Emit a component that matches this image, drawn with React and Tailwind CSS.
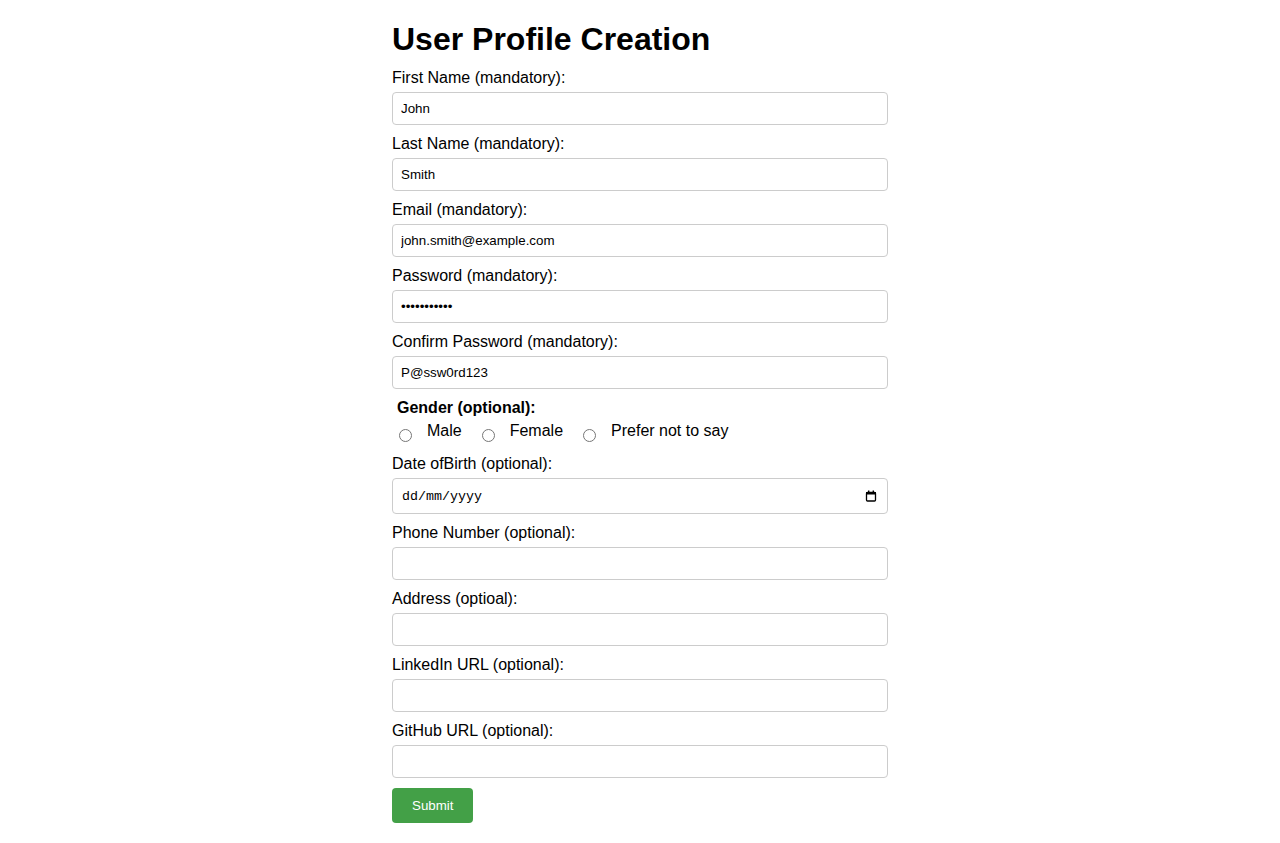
import { useState } from 'react'

const fields = [
  { id: 'firstName', label: 'First Name (mandatory):', type: 'text', value: 'John' },
  { id: 'lastName', label: 'Last Name (mandatory):', type: 'text', value: 'Smith' },
  { id: 'email', label: 'Email (mandatory):', type: 'email', value: 'john.smith@example.com' },
  { id: 'password', label: 'Password (mandatory):', type: 'password', value: 'P@ssw0rd123' },
  { id: 'confirm', label: 'Confirm Password (mandatory):', type: 'text', value: 'P@ssw0rd123' },
]

const optional = [
  { id: 'phone', label: 'Phone Number (optional):', type: 'tel' },
  { id: 'address', label: 'Address (optioal):', type: 'text' },
  { id: 'linkedin', label: 'LinkedIn URL (optional):', type: 'url' },
  { id: 'github', label: 'GitHub URL (optional):', type: 'url' },
]

const inputCls = 'block w-full box-border px-[8px] py-[8px] border border-[#ccc] rounded-[4px] mb-[10px] text-[13.33px] leading-[normal] text-black outline-none'

function Field({ id, label, type, value, onChange }) {
  return (
    <>
      <label htmlFor={id} className="block mb-[5px] text-[16px] leading-[normal] text-black">{label}</label>
      <input id={id} type={type} value={value} onChange={e => onChange(id, e.target.value)} className={inputCls} />
    </>
  )
}

function CalendarIcon() {
  return (
    <svg width="12" height="12" viewBox="0 0 12 12" className="block">
      <rect x="1.5" y="2.5" width="9" height="8.5" rx="1" fill="none" stroke="#000" strokeWidth="1.3" />
      <rect x="1" y="2" width="10" height="2.5" fill="#000" />
      <rect x="3" y="0.5" width="1.4" height="2" fill="#000" />
      <rect x="7.6" y="0.5" width="1.4" height="2" fill="#000" />
    </svg>
  )
}

export default function App() {
  const [form, setForm] = useState(() => {
    const init = {}
    fields.forEach(f => { init[f.id] = f.value })
    optional.forEach(f => { init[f.id] = '' })
    init.dob = ''
    return init
  })
  const [gender, setGender] = useState('')
  const update = (id, v) => setForm(prev => ({ ...prev, [id]: v }))

  return (
    <div className="min-h-screen bg-white font-['Liberation_Sans',Arial,sans-serif] text-black">
      <form className="w-[496px] mx-auto pt-[21px] pb-[20px]" onSubmit={e => e.preventDefault()}>
        <h1 className="text-[32px] leading-[normal] font-bold mb-[11px]">User Profile Creation</h1>

        {fields.map(f => (
          <Field key={f.id} {...f} value={form[f.id]} onChange={update} />
        ))}

        <div className="mb-[13px]">
          <div className="pl-[5px] text-[16px] leading-[normal] font-bold">Gender (optional):</div>
          <div className="flex items-start mt-[5px] text-[16px] leading-[normal]">
            {['Male', 'Female', 'Prefer not to say'].map((g, i) => (
              <label key={g} className={`flex items-start ${i === 0 ? 'ml-[7px]' : ''}`}>
                <input type="radio" name="gender" value={g} checked={gender === g} onChange={() => setGender(g)}
                  className="w-[13px] h-[13px] mt-[7px] m-0" />
                <span className="ml-[15px] mr-[20px]">{g}</span>
              </label>
            ))}
          </div>
        </div>

        <label htmlFor="dob" className="block mb-[5px] text-[16px] leading-[normal]">Date ofBirth (optional):</label>
        <div className="relative mb-[10px]">
          <input id="dob" type="text" placeholder="dd/mm/yyyy" value={form.dob} onChange={e => update('dob', e.target.value)}
            className="block w-full h-[36px] box-border pl-[9px] pr-[30px] border border-[#ccc] rounded-[4px] text-[13.33px] leading-[normal] font-['Liberation_Mono',monospace] text-black placeholder:text-black outline-none" />
          <span className="absolute right-[11px] top-[12px] pointer-events-none">
            <CalendarIcon />
          </span>
        </div>

        {optional.map(f => (
          <Field key={f.id} {...f} value={form[f.id]} onChange={update} />
        ))}

        <button type="submit" className="bg-[#43a047] text-white text-[13.33px] leading-[normal] px-[20px] py-[10px] rounded-[4px] border-0 cursor-pointer">
          Submit
        </button>
      </form>
    </div>
  )
}
